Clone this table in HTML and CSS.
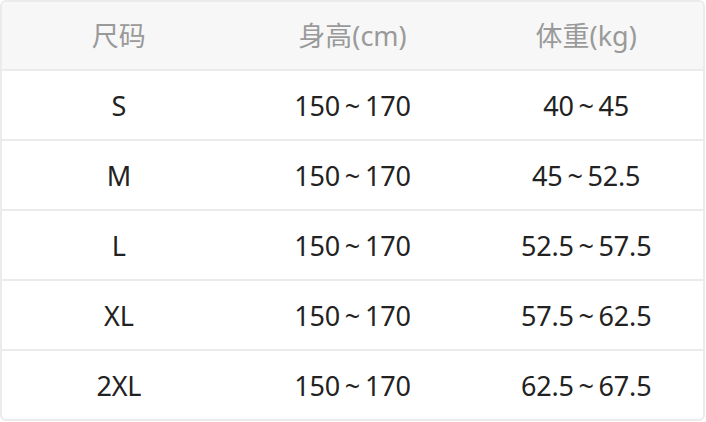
FILE: index.html
```html
<!DOCTYPE html>
<html lang="zh">
<head>
<meta charset="utf-8">
<link rel="stylesheet" href="styles.css">
</head>
<body>
<div class="size-table">
  <div class="row head">
    <div class="cell">尺码</div>
    <div class="cell">身高(cm)</div>
    <div class="cell">体重(kg)</div>
  </div>
  <div class="row">
    <div class="cell">S</div>
    <div class="cell">150 ~ 170</div>
    <div class="cell">40 ~ 45</div>
  </div>
  <div class="row">
    <div class="cell">M</div>
    <div class="cell">150 ~ 170</div>
    <div class="cell">45 ~ 52.5</div>
  </div>
  <div class="row">
    <div class="cell">L</div>
    <div class="cell">150 ~ 170</div>
    <div class="cell">52.5 ~ 57.5</div>
  </div>
  <div class="row">
    <div class="cell">XL</div>
    <div class="cell">150 ~ 170</div>
    <div class="cell">57.5 ~ 62.5</div>
  </div>
  <div class="row">
    <div class="cell">2XL</div>
    <div class="cell">150 ~ 170</div>
    <div class="cell">62.5 ~ 67.5</div>
  </div>
</div>
</body>
</html>
```
FILE: styles.css
```css
html, body {
  margin: 0;
  padding: 0;
  background: #ffffff;
}
.size-table {
  width: 705px;
  box-sizing: border-box;
  border: 2px solid #ebebeb;
  border-radius: 6px;
  overflow: hidden;
  font-family: "Noto Sans", "Noto Sans CJK SC", sans-serif;
  font-size: 27px;
  color: #222222;
}
.row {
  display: grid;
  grid-template-columns: 1fr 1fr 1fr;
  height: 68px;
  align-items: center;
  border-top: 2px solid #ebebeb;
  word-spacing: -2px;
  letter-spacing: -0.2px;
}
.row.head {
  border-top: none;
  height: 67px;
  background: #f7f7f7;
  color: #9a9a9a;
  word-spacing: 0;
  letter-spacing: 0;
}
.cell {
  text-align: center;
  line-height: 1;
}
```
